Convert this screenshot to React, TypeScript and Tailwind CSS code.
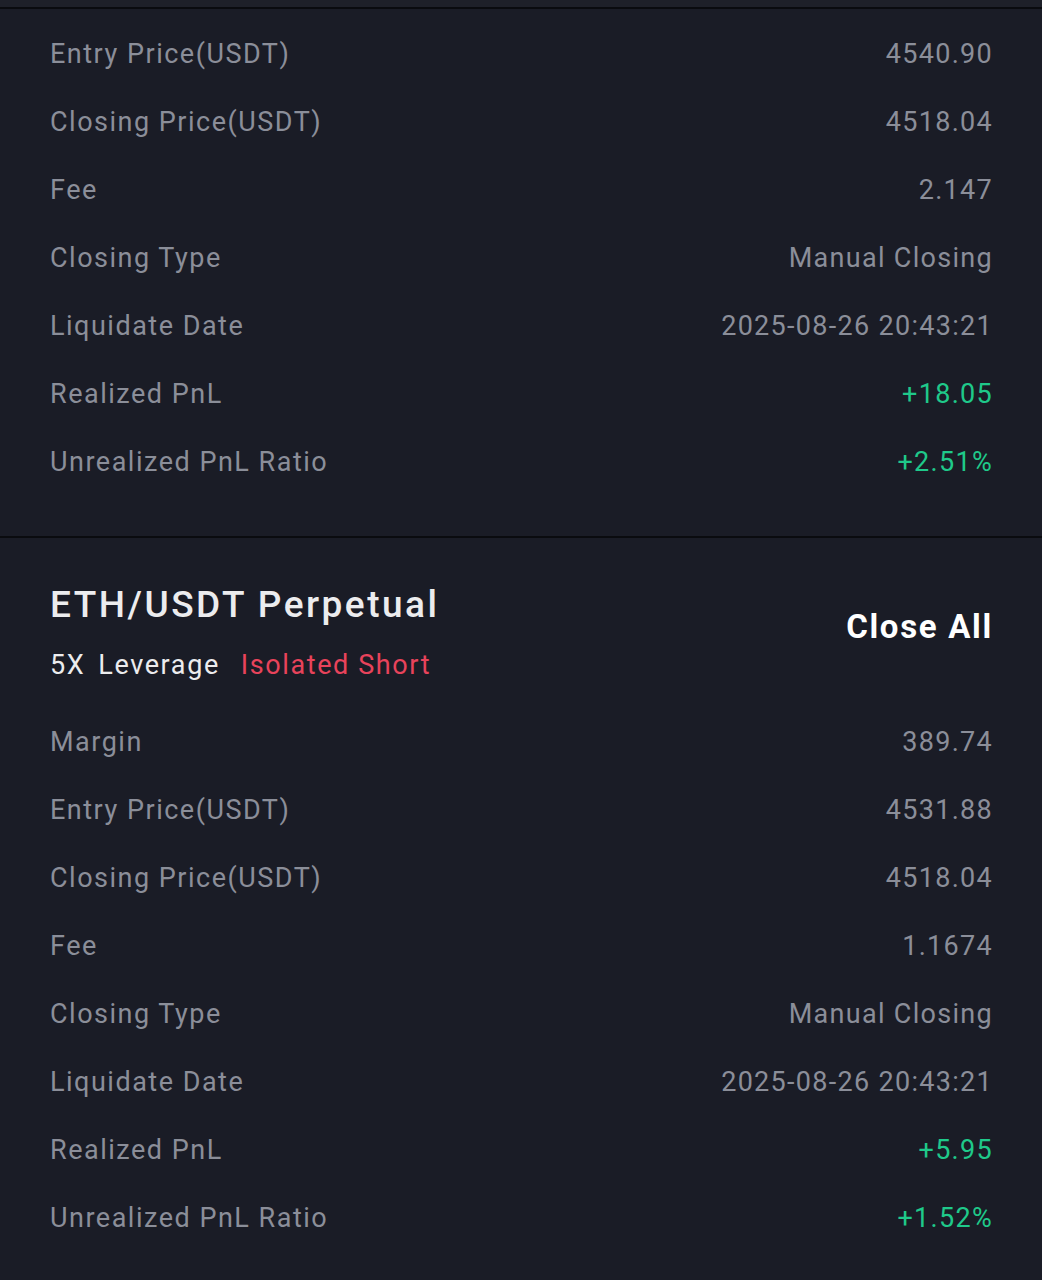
const first = [
  { label: 'Entry Price(USDT)', value: '4540.90' },
  { label: 'Closing Price(USDT)', value: '4518.04' },
  { label: 'Fee', value: '2.147' },
  { label: 'Closing Type', value: 'Manual Closing' },
  { label: 'Liquidate Date', value: '2025-08-26 20:43:21' },
  { label: 'Realized PnL', value: '+18.05', up: true },
  { label: 'Unrealized PnL Ratio', value: '+2.51%', up: true },
];

const second = [
  { label: 'Margin', value: '389.74' },
  { label: 'Entry Price(USDT)', value: '4531.88' },
  { label: 'Closing Price(USDT)', value: '4518.04' },
  { label: 'Fee', value: '1.1674' },
  { label: 'Closing Type', value: 'Manual Closing' },
  { label: 'Liquidate Date', value: '2025-08-26 20:43:21' },
  { label: 'Realized PnL', value: '+5.95', up: true },
  { label: 'Unrealized PnL Ratio', value: '+1.52%', up: true },
];

type Row = { label: string; value: string; up?: boolean };

function Rows({ rows }: { rows: Row[] }) {
  return (
    <div className="flex flex-col">
      {rows.map((r, i) => (
        <div key={i} className="flex h-[68px] items-center justify-between text-[27px]">
          <span className="text-[#8b8e99] tracking-[1.5px]">{r.label}</span>
          <span className={`tracking-[1.3px] -mr-[1px] ${r.up ? 'text-[#1fc98a]' : 'text-[#8b8e99]'}`}>{r.value}</span>
        </div>
      ))}
    </div>
  );
}

export default function App() {
  return (
    <div className="w-[1042px] h-[1280px] overflow-hidden bg-[#1a1c26]" style={{ fontFamily: 'Roboto, "Noto Sans", sans-serif' }}>
      {/* top edge of previous card */}
      <div className="h-[7px] bg-[#1e2029]" />
      <div className="h-[2px] bg-[#0a0b0f]" />

      <div className="px-[50px] pt-[11px] pb-[40px]">
        <Rows rows={first} />
      </div>

      <div className="h-[2px] bg-[#0a0b0f]" />

      <div className="px-[50px]">
        {/* header */}
        <div className="flex items-start justify-between pt-[44px] pb-[23px]">
          <div>
            <h2 className="text-[37px] leading-[46px] font-medium text-[#ececee] tracking-[2.5px]">ETH/USDT Perpetual</h2>
            <div className="mt-[17px] flex items-center text-[27px] leading-[40px] tracking-[1.6px]">
              <span className="text-[#ececee]">5X</span>
              <span className="ml-[13px] text-[#ececee]">Leverage</span>
              <span className="ml-[21px] text-[#e8435b]">Isolated Short</span>
            </div>
          </div>
          <button className="mt-[25px] -mr-[1px] text-[33px] leading-[40px] font-bold text-white tracking-[1.7px]">Close All</button>
        </div>

        <Rows rows={second} />
      </div>
    </div>
  );
}
